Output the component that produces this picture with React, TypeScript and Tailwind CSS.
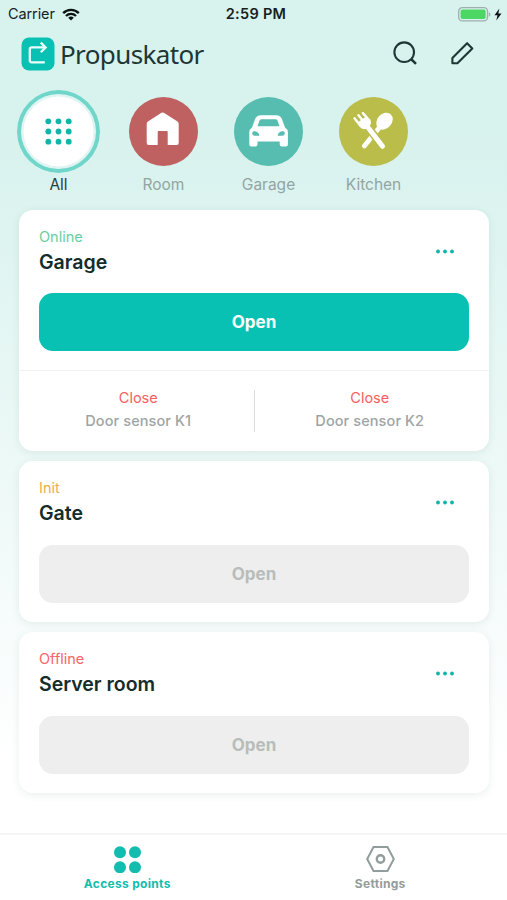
import type { ReactNode } from 'react';

type Status = 'Online' | 'Init' | 'Offline';

interface Sensor {
  name: string;
  state: string;
}

interface AccessPoint {
  name: string;
  status: Status;
  sensors?: Sensor[];
}

const STATUS_COLOR: Record<Status, string> = {
  Online: 'text-[#68cf9d]',
  Init: 'text-[#ebae50]',
  Offline: 'text-[#f96464]',
};

const POINTS: AccessPoint[] = [
  {
    name: 'Garage',
    status: 'Online',
    sensors: [
      { name: 'Door sensor K1', state: 'Close' },
      { name: 'Door sensor K2', state: 'Close' },
    ],
  },
  { name: 'Gate', status: 'Init' },
  { name: 'Server room', status: 'Offline' },
];

function StatusBar() {
  return (
    <div className="grid h-[28px] grid-cols-3 items-center pl-[8px] pr-[5px] text-[14.5px] text-[#16211f]">
      <div className="flex items-center gap-[7px]">
        <span className="tracking-[-0.1px]">Carrier</span>
        <svg width="18" height="13" viewBox="0 0 18 13" fill="none" stroke="#0b1211" strokeWidth="2.3">
          <path d="M1.2 5.1a11 11 0 0 1 15.6 0" />
          <path d="M4 8a7 7 0 0 1 10 0" />
          <path d="M9 12.6 6.2 9.8a4 4 0 0 1 5.6 0Z" fill="#0b1211" stroke="none" />
        </svg>
      </div>
      <span className="pl-[2px] text-center font-semibold tracking-[0.3px]">2:59 PM</span>
      <div className="flex items-center justify-end gap-[3px]">
        <svg width="33" height="15" viewBox="0 0 33 15">
          <rect x="0.7" y="0.7" width="28.8" height="13.2" rx="3.6" fill="none" stroke="#9dafad" strokeWidth="1.3" />
          <rect x="2.6" y="2.6" width="25" height="9.4" rx="1.8" fill="#4cd765" />
          <path d="M30.8 5v4.8q1.6-.6 1.6-2.4T30.8 5Z" fill="#9dafad" />
        </svg>
        <svg width="8" height="13" viewBox="0 0 8 13" fill="#0b1211">
          <path d="M5.4.5.5 7.2h3L2.3 12.4 7.5 5.4H4.3Z" />
        </svg>
      </div>
    </div>
  );
}

function Header() {
  return (
    <header className="flex h-[52px] items-center pl-[21px] pr-[33px]">
      <svg width="34" height="34" viewBox="0 0 34 34" fill="none">
        <rect x="0.5" y="0.5" width="33" height="33" rx="7.5" fill="#08c1b2" />
        <path d="M23.8 25.3H10.8q-2 0-2-2V12.4q0-2 2-2H23" stroke="#e9fffb" strokeWidth="2.3" />
        <path d="m19.8 5.6 4.8 4.8-4.8 4.8" stroke="#e9fffb" strokeWidth="2.3" />
      </svg>
      <h1 className="ml-[5px] pb-px font-['Noto_Sans'] text-[26px] leading-[34px] tracking-[-0.62px] text-[#1c3735]">
        Propuskator
      </h1>
      <div className="ml-auto flex items-center gap-[33px] pb-[2px]">
        <svg width="24" height="24" viewBox="0 0 24 24" fill="none" stroke="#1c3735" strokeWidth="2.1">
          <circle cx="11.2" cy="11.2" r="9.8" />
          <path d="m18 18 5 4.8" strokeWidth="2.5" />
        </svg>
        <svg
          width="24"
          height="24"
          viewBox="0 0 24 24"
          fill="none"
          stroke="#1c3735"
          strokeWidth="2.1"
          strokeLinejoin="round"
        >
          <path d="M2.400 22.300V16.900L17.100 2.200l5.200 5.200L7.400 22.300Z" />
        </svg>
      </div>
    </header>
  );
}

const GridIcon = (
  <svg width="83" height="83" viewBox="0 0 83 83" fill="#10b5a8">
    {[31.3, 41.5, 51.7].map((y) =>
      [31.3, 41.5, 51.7].map((x) => <circle key={`${x}-${y}`} cx={x} cy={y} r="2.9" />),
    )}
  </svg>
);

const HouseIcon = (
  <svg width="69" height="69" viewBox="0.3 0 69 69" fill="#fff">
    <path d="M32.8 15.8q1.2-.8 2.4 0l13.6 8.8q1.2.8 1.2 2.2V46q0 2-2 2h-9V35q0-1-1-1h-8q-1 0-1 1v13h-9q-2 0-2-2V26.800q0-1.400 1.200-2.200Z" />
  </svg>
);

const CarIcon = (
  <svg width="69" height="69" viewBox="0.5 0 69 69" fill="#fff">
    <path
      fillRule="evenodd"
      d="M27.500 18.200h15q4.500 0 6 4l3 8.300q2.900 1.700 2.900 5V47.500q0 2-2 2h-4q-2.200 0-2.200-2v-3H24v3q0 2-2.200 2h-4q-2 0-2-2V35.500q0-3.300 2.700-5l3-8.300q1.500-4 6-4ZM28 22.200q-1.500 0-2 1.400l-2 5.600h22l-2-5.600q-.5-1.400-2-1.400ZM20.500 34.200c-2.500 0-2.500 4.600.8 4.600h4.500c0-2.600-2.500-4.600-5.300-4.600Zm29 0c2.500 0 2.500 4.600-.8 4.600h-4.500c0-2.600 2.500-4.600 5.300-4.600Z"
    />
  </svg>
);

const CutleryIcon = (
  <svg width="69" height="69" viewBox="0.5 0 69 69" fill="none" strokeLinecap="round" strokeLinejoin="round">
    {/* spoon */}
    <ellipse cx="46" cy="24.200" rx="7.300" ry="9.300" transform="rotate(42 46 24.200)" fill="#fff" />
    <path d="M40.500 31 25.800 49" stroke="#fff" strokeWidth="4.800" />
    {/* fork, with a gap where it crosses the spoon */}
    <path d="M29 29.500 44 49.300" stroke="#babd4a" strokeWidth="8" strokeLinecap="butt" />
    <path d="M28 28.500 44 49.300" stroke="#fff" strokeWidth="5" />
    <path d="m19.300 25.300 8-5.500 4 5.500q1 4-2.300 5.900t-6.300-.4Z" fill="#fff" />
    <path
      d="m16 21.300 6 7.700q3.200 3.400 6.800.7t2-6.400l-6.500-7.200M20 18.200l6 7.500"
      stroke="#fff"
      strokeWidth="2.400"
    />
  </svg>
);

function Category({
  label,
  icon,
  circle,
  active = false,
}: {
  label: string;
  icon: ReactNode;
  circle: string;
  active?: boolean;
}) {
  return (
    <button type="button" className="flex w-[105px] flex-col items-center">
      <span className="flex h-[83px] items-center justify-center">
        <span className={`flex items-center justify-center rounded-full ${circle}`}>{icon}</span>
      </span>
      <span
        className={`mt-px text-[15.5px] leading-[22px] ${
          active ? 'text-[#263f3c]' : 'text-[#92a5a2]'
        }`}
      >
        {label}
      </span>
    </button>
  );
}

function Card({ point }: { point: AccessPoint }) {
  const enabled = point.status === 'Online';
  return (
    <section className="rounded-[14px] bg-white shadow-[0_2px_8px_rgba(30,80,70,0.09)]">
      <div className={`px-[20px] pt-[17px] ${point.sensors ? 'pb-[19px]' : 'pb-[19.5px]'}`}>
        <div className="flex justify-between">
          <div>
            <p className={`text-[14.5px] leading-[20px] ${STATUS_COLOR[point.status]}`}>{point.status}</p>
            <h2 className="mt-[2px] text-[19.5px] font-semibold leading-[26px] text-[#142d2a]">{point.name}</h2>
          </div>
          <button type="button" className="mr-[15px] mt-[22px] h-[5px]">
            <svg width="18" height="5" viewBox="0 0 18 5" fill="#10b5a8">
              <circle cx="2" cy="2.500" r="1.900" />
              <circle cx="9" cy="2.500" r="1.900" />
              <circle cx="16" cy="2.500" r="1.900" />
            </svg>
          </button>
        </div>
        <button
          type="button"
          className={`mt-[18.500px] h-[58px] w-full rounded-[14px] pt-[2px] text-[17px] font-bold ${
            enabled ? 'bg-[#08c1b2] text-white' : 'bg-[#eeeeee] text-[#b8bcbb]'
          }`}
        >
          Open
        </button>
      </div>
      {point.sensors && (
        <div className="flex h-[81px] items-center border-t border-[#f1f3f3]">
          {point.sensors.map((sensor, i) => (
            <div
              key={sensor.name}
              className={`flex h-[42px] flex-1 flex-col items-center justify-center pb-[4px] text-[14.5px] leading-[23px] ${
                i > 0 ? 'border-l border-[#dadddd] pr-[4px]' : 'pl-[4px]'
              }`}
            >
              <span className="text-[#fb5c60]">{sensor.state}</span>
              <span className="font-medium tracking-[0.1px] text-[#9da5a4]">{sensor.name}</span>
            </div>
          ))}
        </div>
      )}
    </section>
  );
}

function TabBar() {
  return (
    <nav className="mt-auto grid h-[67px] grid-cols-2 border-t-2 border-[#f4f5f5] bg-white text-[12px] font-bold leading-[16px] tracking-[0.3px]">
      <a className="flex flex-col items-center pt-[10px] text-[#10bdae]">
        <svg width="28" height="28" viewBox="0 0 28 28" fill="currentColor">
          <circle cx="7" cy="7.300" r="6" />
          <circle cx="22" cy="7.300" r="6" />
          <circle cx="7" cy="22.300" r="6" />
          <circle cx="22" cy="22.300" r="6" />
        </svg>
        <span className="mt-[3px] pl-px">Access points</span>
      </a>
      <a className="flex flex-col items-center pt-[10px] text-[#929c9b]">
        <svg width="30" height="28" viewBox="0 0 30 28" fill="none" stroke="currentColor" strokeWidth="2">
          <path d="M8.500 2h14l6.300 12-6.300 12h-14L2.200 14Z" />
          <circle cx="15.500" cy="14" r="3.700" strokeWidth="2.400" />
        </svg>
        <span className="mt-[3px]">Settings</span>
      </a>
    </nav>
  );
}

export default function App() {
  return (
    <div className="flex h-[900px] w-[507px] flex-col overflow-hidden bg-linear-to-b from-[#d8f2ee] from-15% to-white to-85% font-['Inter',sans-serif]">
      <StatusBar />
      <Header />
      <div className="flex pl-[6px] pt-[10px]">
        <Category
          label="All"
          icon={GridIcon}
          circle="box-border size-[83px] overflow-hidden bg-white shadow-[inset_0_0_0_4px_#70d6ca,inset_0_0_0_6.5px_#e0f5f2]"
          active
        />
        <Category label="Room" icon={HouseIcon} circle="size-[69px] bg-[#be6160]" />
        <Category label="Garage" icon={CarIcon} circle="size-[69px] bg-[#56bdb0]" />
        <Category label="Kitchen" icon={CutleryIcon} circle="size-[69px] bg-[#babd4a]" />
      </div>
      <main className="flex flex-col gap-[10px] pl-[19px] pr-[18px] pt-[13.500px]">
        {POINTS.map((point) => (
          <Card key={point.name} point={point} />
        ))}
      </main>
      <TabBar />
    </div>
  );
}
